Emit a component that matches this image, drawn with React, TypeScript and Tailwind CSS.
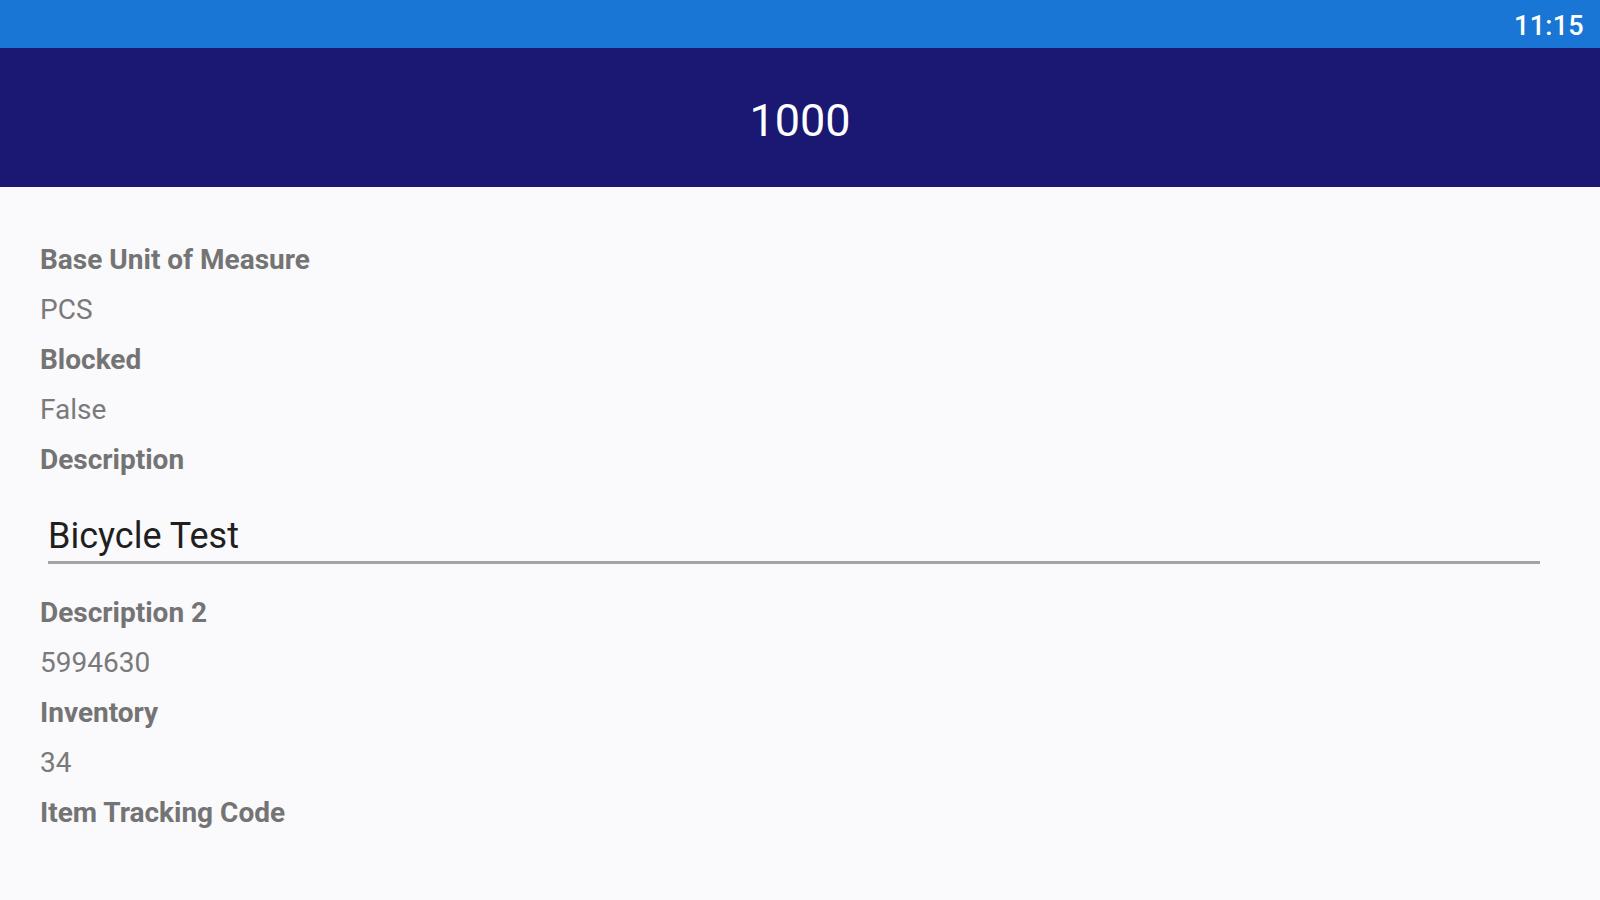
import React from "react";

const Label = ({ children }: { children: React.ReactNode }) => (
  <div className="h-[50px] leading-[50px] text-[28px] font-bold text-[#747474] whitespace-nowrap">{children}</div>
);
const Value = ({ children }: { children: React.ReactNode }) => (
  <div className="h-[50px] leading-[50px] text-[28px] text-[#7a7a7a] whitespace-nowrap">{children}</div>
);

export default function App() {
  return (
    <div className="w-[1600px] h-[900px] bg-[#faf9fb] flex flex-col overflow-hidden" style={{ fontFamily: "Roboto, 'Noto Sans', sans-serif" }}>
      <div className="h-[48px] bg-[#1976d4] flex items-center justify-end pr-[16px] pt-[4px] shrink-0">
        <span className="text-white text-[27px] font-medium leading-none tracking-[0.3px]">11:15</span>
      </div>
      <div className="h-[139px] bg-[#1b1873] flex items-center justify-center pt-[5px] shrink-0">
        <span className="text-white text-[45px] leading-none">1000</span>
      </div>
      <div className="pl-[40px] pt-[48px] flex flex-col">
        <Label>Base Unit of Measure</Label>
        <Value>PCS</Value>
        <Label>Blocked</Label>
        <Value>False</Value>
        <Label>Description</Label>
        <div className="ml-[8px] mr-[60px] mt-[29px] mb-[24px] border-b-[3px] border-[#a3a3a3]">
          <div className="h-[47px] leading-[44px] text-[36px] text-[#1f1f1f]">Bicycle Test</div>
        </div>
        <Label>Description 2</Label>
        <Value>5994630</Value>
        <Label>Inventory</Label>
        <Value>34</Value>
        <Label>Item Tracking Code</Label>
      </div>
    </div>
  );
}
